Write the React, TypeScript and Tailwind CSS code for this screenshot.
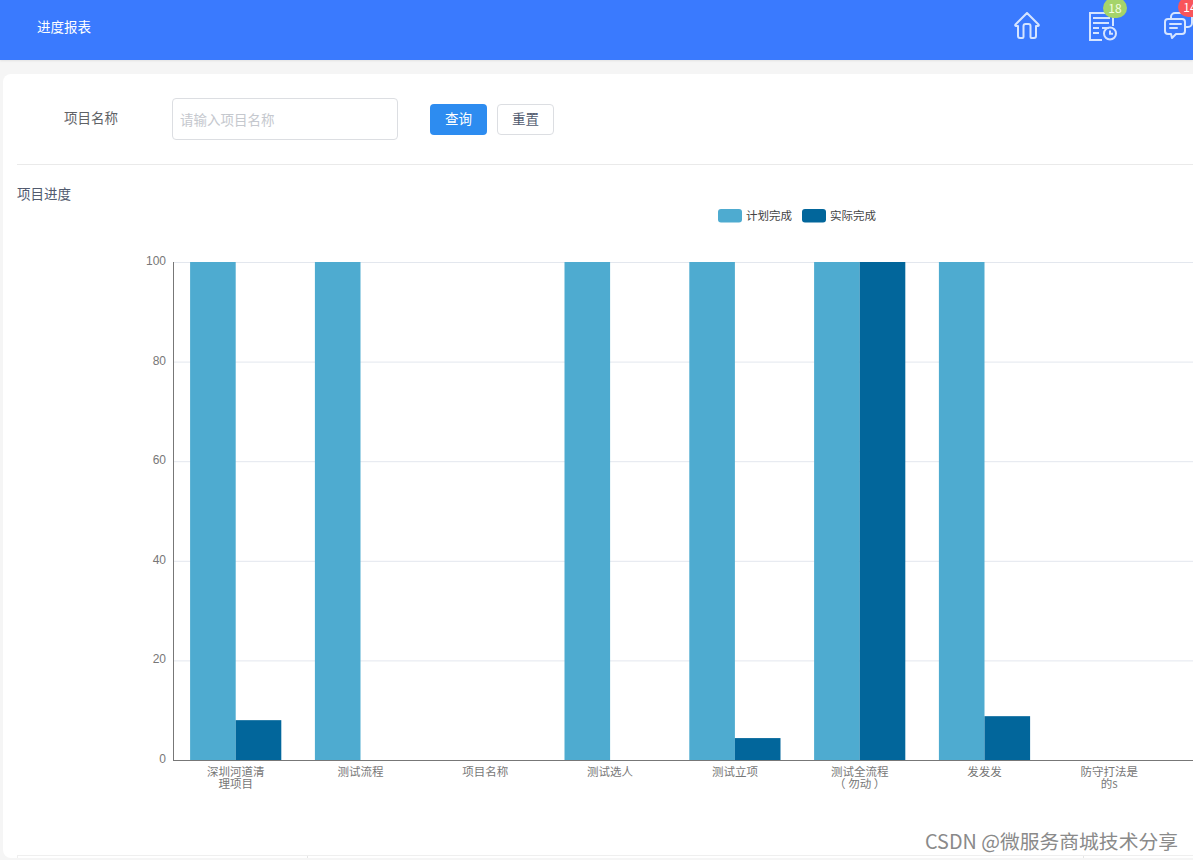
import React from "react";

const planColor = "#4eabd0";
const realColor = "#02669b";

const chartTop = 57; // y of value 100 inside the svg
const chartBottom = 555;
const chartLeft = 173;
const groupWidth = 124.8;
const barWidth = 45.6;

const items = [
  { name: ["深圳河道清", "理项目"], plan: 100, real: 8 },
  { name: ["测试流程"], plan: 100, real: 0 },
  { name: ["项目名称"], plan: 0, real: 0 },
  { name: ["测试选人"], plan: 100, real: 0 },
  { name: ["测试立项"], plan: 100, real: 4.4 },
  { name: ["测试全流程", "（ 勿动 ）"], plan: 100, real: 100 },
  { name: ["发发发"], plan: 100, real: 8.8 },
  { name: ["防守打法是", "的s"], plan: 0, real: 0 },
];

const ticks = [0, 20, 40, 60, 80, 100];

const yOf = (v: number) => chartBottom - ((chartBottom - chartTop) * v) / 100;

const Chart = () => {
  return (
    <svg width="1193" height="650" className="block">
      {/* legend */}
      <rect x="718" y="4" width="24" height="13.5" rx="3" fill={planColor} />
      <text x="746" y="14.5" fontSize="11.5" fill="#444">
        计划完成
      </text>
      <rect x="802" y="4" width="24" height="13.5" rx="3" fill={realColor} />
      <text x="830" y="14.5" fontSize="11.5" fill="#444">
        实际完成
      </text>

      {/* grid */}
      {ticks.map((t) => (
        <g key={t}>
          {t > 0 && <line x1={chartLeft} x2="1193" y1={yOf(t) + 0.5} y2={yOf(t) + 0.5} stroke="#e3e7ee" />}
          <text x={chartLeft - 7} y={yOf(t) + 3} fontSize="12" textAnchor="end" fill="#777" fontFamily="Liberation Sans, sans-serif">
            {t}
          </text>
        </g>
      ))}

      {/* bars */}
      {items.map((item, i) => {
        const center = chartLeft + groupWidth * (i + 0.5) + 0.3;
        return (
          <g key={i}>
            {item.plan > 0 && (
              <rect x={center - barWidth} y={yOf(item.plan)} width={barWidth} height={chartBottom - yOf(item.plan)} fill={planColor} />
            )}
            {item.real > 0 && (
              <rect x={center} y={yOf(item.real)} width={barWidth} height={chartBottom - yOf(item.real)} fill={realColor} />
            )}
            {item.name.map((line, j) => (
              <text key={j} x={center} y={chartBottom + 16 + j * 12} fontSize="11.5" textAnchor="middle" fill="#777">
                {line}
              </text>
            ))}
          </g>
        );
      })}

      {/* axes */}
      <line x1={chartLeft + 0.5} x2={chartLeft + 0.5} y1={chartTop} y2={chartBottom} stroke="#777" />
      <line x1={chartLeft} x2="1193" y1={chartBottom + 0.5} y2={chartBottom + 0.5} stroke="#777" />
    </svg>
  );
};

const HomeIcon = () => (
  <svg width="26" height="27" viewBox="0 0 26 27" fill="none" stroke="#d5e4ff" strokeWidth="2" strokeLinejoin="round" strokeLinecap="round">
    <path d="M13 1 1.5 12.5c-.6.7-.2 1.5.6 1.5H4v10a2 2 0 0 0 2 2h2.5a1 1 0 0 0 1-1V14a2 2 0 0 1 2-2h3a2 2 0 0 1 2 2v11a1 1 0 0 0 1 1H20a2 2 0 0 0 2-2V14h1.900c.8 0 1.200-.8.6-1.500L13 1Z" />
  </svg>
);

const ReportIcon = () => (
  <svg width="30" height="30" viewBox="0 0 30 30" fill="none" stroke="#d5e4ff" strokeWidth="2" className="max-w-none">
    <path d="M13 28H1V1h23v13" />
    <path d="M4 6h17M4 11h16M4 16h6M13 16h7M4 21h6" />
    <circle cx="21" cy="21.500" r="6" />
    <path d="M21 18.500v3.200h3" />
  </svg>
);

const ChatIcon = () => (
  <svg width="30" height="28" viewBox="0 0 30 28" fill="none" stroke="#d5e4ff" strokeWidth="2" strokeLinecap="round" strokeLinejoin="round">
    <path d="M4 7h14a3 3 0 0 1 3 3v9a3 3 0 0 1-3 3h-6l-4 4-1-4H4a3 3 0 0 1-3-3v-9a3 3 0 0 1 3-3Z" />
    <path d="M6 12h11M6 16h7" />
    <path d="M7 6V5a4 4 0 0 1 4-4h13a4 4 0 0 1 4 4v6a4 4 0 0 1-4 4h-2" />
  </svg>
);

export default function App() {
  return (
    <div className="relative w-[1193px] h-[860px] overflow-hidden bg-[#f5f5f5] font-['Noto_Sans_CJK_SC','Liberation_Sans',sans-serif]">
      <header className="flex h-[60px] justify-between bg-[#3a7afe] pl-[37px] shadow-[0_1px_2px_rgba(0,0,0,0.08)]">
        <div className="mt-[16px] text-[13.5px] leading-[20px] text-white">进度报表</div>
        <div className="flex items-start gap-[49px] pt-[12px] -mr-[1px]">
          <HomeIcon />
          <div className="relative w-[26px]">
            <ReportIcon />
            <span className="absolute -top-[14px] left-[14px] flex h-[20px] w-[24px] items-center justify-center rounded-full bg-[#a5d46a] text-[12px] text-[#f4ffe0]">
              18
            </span>
          </div>
          <div className="relative">
            <ChatIcon />
            <span className="absolute -top-[15px] left-[14px] flex h-[20px] w-[24px] items-center justify-center rounded-full bg-[#f9555a] text-[12px] text-white">
              14
            </span>
          </div>
        </div>
      </header>

      <main className="ml-[3px] mt-[14px] w-[1200px] h-[784px] rounded-lg bg-white pl-[14px]">
        <div className="flex h-[91px] items-start border-b border-[#eaeaea]">
          <label className="ml-[47px] mt-[33px] text-[13.5px] text-[#606266]">项目名称</label>
          <input
            placeholder="请输入项目名称"
            className="ml-[54px] mt-[24px] h-[42px] w-[226px] rounded border border-[#dcdee2] px-[7px] text-[13.5px] placeholder:text-[#c5c8ce]"
          />
          <button className="ml-[32px] mt-[30px] h-[31px] w-[57px] rounded bg-[#2d8cf0] pb-[2px] text-[13.5px] text-white">查询</button>
          <button className="ml-[10px] mt-[30px] h-[31px] w-[57px] rounded border border-[#dcdee2] pb-[2px] text-[13.5px] text-[#515a6e]">重置</button>
        </div>
        <div className="mt-[18px] text-[13.5px] leading-[20px] text-[#515a6e]">项目进度</div>
        <div className="-ml-[17px] mt-[2px] h-[650px] overflow-hidden">
          <Chart />
        </div>
        {/* table header just peeking in at the bottom */}
        <div className="flex h-[3px] border-t border-l border-[#efefef]">
          <div className="w-[290px] border-r border-[#e6e6e6]" />
          <div className="w-[776px] border-r border-[#e6e6e6]" />
        </div>
      </main>

      <div className="absolute bottom-[6px] right-[15px] text-[19.8px] leading-[26px] text-[#8a8a8a]">CSDN @微服务商城技术分享</div>
    </div>
  );
}
